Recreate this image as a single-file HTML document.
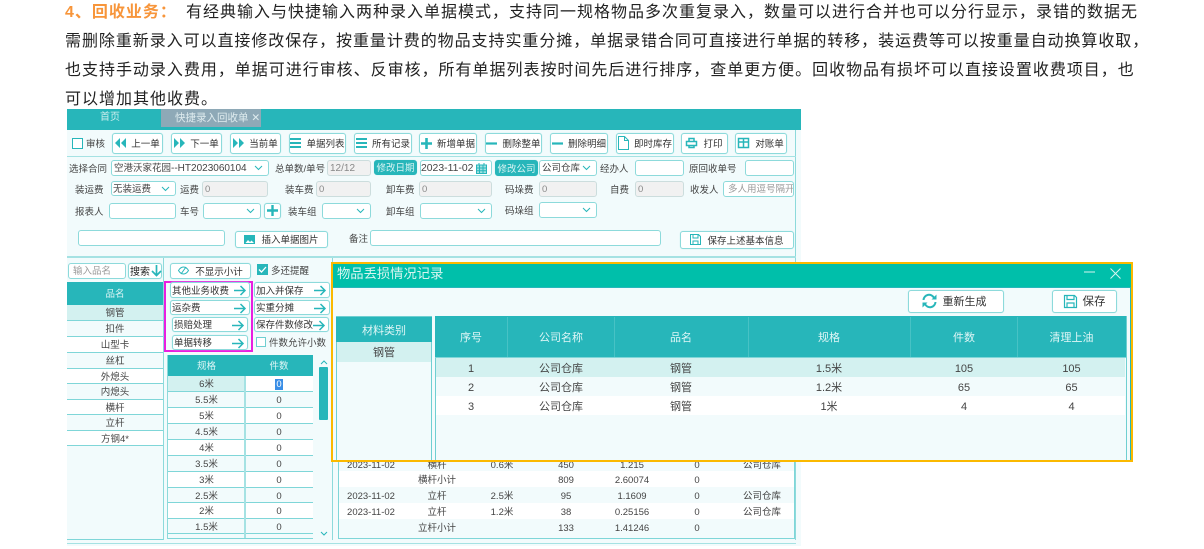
<!DOCTYPE html>
<html lang="zh"><head><meta charset="utf-8"><title>回收业务</title>
<style>
html,body{margin:0;padding:0;background:#fff;width:1204px;height:549px;overflow:hidden}
*{box-sizing:border-box}
body{font-family:"Liberation Sans","Noto Sans CJK SC",sans-serif;position:relative}
.p{position:absolute;left:65px;white-space:nowrap;font-size:16px;letter-spacing:1px;line-height:24px;color:#222}
.d,.t,.b,.i,.r{position:absolute}
.t{white-space:nowrap;font-size:9.5px;line-height:16px;color:#444;margin-top:2px}
.c{text-align:center}
.b{background:#fff;border:1px solid #8ddadb;border-radius:3px;display:flex;align-items:center;justify-content:center;font-size:9.5px;color:#333;white-space:nowrap;box-shadow:0 0 1px #b5e8e8;padding-bottom:1px}
.b svg{flex:none;margin-right:6px}
.i{background:#fff;border:1px solid #8ddadb;border-radius:3px;font-size:9.5px;line-height:16px;color:#444;padding-left:2px;white-space:nowrap;overflow:hidden}
.g{background:#f1f1f1;border-color:#cdd;color:#888}
.ch{position:absolute;right:5px;top:50%;margin-top:-3px}
.h{background:#27b6ba;color:#dff6f6;text-align:center;position:absolute}
.r{border-bottom:1px solid #7fd6d8;text-align:center;font-size:9.5px;color:#444;line-height:17px}
.w{font-size:11px;color:#444;text-align:center;position:absolute;line-height:23px}
svg{display:block;overflow:visible}
.ar{position:absolute;right:3px;top:2px}
.bl{justify-content:flex-start;padding-left:1px}
</style></head><body>

<div class="p" style="top:1px"><b style="color:#f7953a">4、回收业务：</b></div>
<div class="p" style="top:1px;left:186px">有经典输入与快捷输入两种录入单据模式，支持同一规格物品多次重复录入，数量可以进行合并也可以分行显示，录错的数据无</div>
<div class="p" style="top:30px;letter-spacing:.94px">需删除重新录入可以直接修改保存，按重量计费的物品支持实重分摊，单据录错合同可直接进行单据的转移，装运费等可以按重量自动换算收取，</div>
<div class="p" style="top:59px;letter-spacing:.98px">也支持手动录入费用，单据可进行审核、反审核，所有单据列表按时间先后进行排序，查单更方便。回收物品有损坏可以直接设置收费项目，也</div>
<div class="p" style="top:88px">可以增加其他收费。</div>

<div style="position:absolute;left:0;top:0;width:1204px;height:549px;filter:blur(.3px)">
<!-- app background -->
<div class="d" style="left:67px;top:109px;width:734px;height:437px;background:#f2fbfc"></div>
<div class="d" style="left:67px;top:109px;width:734px;height:21px;background:#27b6ba"></div>
<div class="d" style="left:161px;top:109px;width:100px;height:18px;background:#8ea9b7"></div>
<div class="t c" style="left:80px;top:109px;width:60px;color:#cdeeee;font-size:10px;line-height:14px">首页</div>
<div class="t" style="left:175px;top:109px;color:#dfecef;font-size:10.5px;line-height:14px">快捷录入回收单 ✕</div>
<div class="d" style="left:795px;top:130px;width:1px;height:410px;background:#8ddadb"></div>

<!-- toolbar -->
<div class="d" style="left:72px;top:138px;width:11px;height:11px;border:1.5px solid #27b6ba;background:#fff"></div>
<div class="t" style="left:86px;top:135px">审核</div>
<div class="b" style="left:112px;top:133px;width:51px;height:21px"><svg width="11" height="10" style="margin-right:5px"><path d="M5 0v10L0 5zM11 0v10L6 5z" fill="#27b6ba"/></svg>上一单</div>
<div class="b" style="left:171px;top:133px;width:51px;height:21px"><svg width="11" height="10" style="margin-right:5px"><path d="M0 0v10l5-5zM6 0v10l5-5z" fill="#27b6ba"/></svg>下一单</div>
<div class="b" style="left:230px;top:133px;width:51px;height:21px"><svg width="11" height="10" style="margin-right:5px"><path d="M0 0v10l5-5zM6 0v10l5-5z" fill="#27b6ba"/></svg>当前单</div>
<div class="b" style="left:289px;top:133px;width:57px;height:21px"><svg width="11" height="10" style="margin-right:5px"><path d="M0 1h11M0 5h11M0 9h11" stroke="#27b6ba" stroke-width="2"/></svg>单据列表</div>
<div class="b" style="left:354px;top:133px;width:58px;height:21px"><svg width="11" height="10" style="margin-right:5px"><path d="M0 1h11M0 5h11M0 9h11" stroke="#27b6ba" stroke-width="2"/></svg>所有记录</div>
<div class="b" style="left:419px;top:133px;width:58px;height:21px"><svg width="11" height="11" style="margin-right:5px"><path d="M5.500 0v11M0 5.500h11" stroke="#27b6ba" stroke-width="2.600"/></svg>新增单据</div>
<div class="b" style="left:485px;top:133px;width:57px;height:21px"><svg width="11" height="3" style="margin-right:5px"><path d="M0 1.500h11" stroke="#27b6ba" stroke-width="2.200"/></svg>删除整单</div>
<div class="b" style="left:550px;top:133px;width:58px;height:21px"><svg width="11" height="3" style="margin-right:5px"><path d="M0 1.500h11" stroke="#27b6ba" stroke-width="2.200"/></svg>删除明细</div>
<div class="b" style="left:616px;top:133px;width:58px;height:21px"><svg width="11" height="14" style="margin-right:5px"><path d="M.5.500h6l4 4v9H.5zM6.500.5v4h4" fill="none" stroke="#27b6ba"/></svg>即时库存</div>
<div class="b" style="left:681px;top:133px;width:47px;height:21px"><svg width="11" height="10"><path d="M3 3V.5h5V3M.5 3.500h10v4H.5zM3 7v2.500h5V7" fill="none" stroke="#27b6ba" stroke-width="1.500"/></svg>打印</div>
<div class="b" style="left:735px;top:133px;width:52px;height:21px"><svg width="11" height="10"><path d="M.5.500h10v9H.5zM.5 4h10M5.500.5v9" fill="none" stroke="#27b6ba" stroke-width="1.500"/></svg>对账单</div>
<div class="d" style="left:67px;top:156px;width:729px;height:1px;background:#a5e2e3"></div>

<!-- row 1 -->
<div class="t" style="left:69px;top:160px">选择合同</div>
<div class="i" style="left:111px;top:160px;width:158px;height:16px;font-size:10px"><span style="font-size:9.500px">空港沃家花园</span>--HT2023060104<svg class="ch" width="9" height="6"><path d="M1 1l3.500 3.500L8 1" fill="none" stroke="#27b6ba"/></svg></div>
<div class="t" style="left:275px;top:160px">总单数/单号</div>
<div class="i g" style="left:327px;top:160px;width:44px;height:16px;font-size:10px">12/12</div>
<div class="b" style="left:374px;top:160px;width:43px;height:15px;background:#27b6ba;border-color:#27b6ba;color:#d7f3f3">修改日期</div>
<div class="i" style="left:420px;top:160px;width:72px;height:16px;font-size:10.400px;padding-left:0">2023-11-02<svg style="position:absolute;right:4px;top:2px" width="11" height="11"><path d="M0 1.500h11V11H0z" fill="#9fe0e1"/><path d="M.5 2h10v8.500H.5zM.5 5h10M.5 7.700h10M3.500 2v8.500M7 2v8.500M3 0v2M8 0v2" fill="none" stroke="#27b6ba"/></svg></div>
<div class="b" style="left:495px;top:160px;width:43px;height:16px;background:#27b6ba;border-color:#27b6ba;color:#d7f3f3">修改公司</div>
<div class="i" style="left:539px;top:160px;width:58px;height:16px">公司仓库<svg class="ch" width="9" height="6"><path d="M1 1l3.500 3.500L8 1" fill="none" stroke="#27b6ba"/></svg></div>
<div class="t" style="left:600px;top:160px">经办人</div>
<div class="i" style="left:635px;top:160px;width:49px;height:16px"></div>
<div class="t" style="left:689px;top:160px">原回收单号</div>
<div class="i" style="left:745px;top:160px;width:49px;height:16px"></div>

<!-- row 2 -->
<div class="t" style="left:75px;top:181px">装运费</div>
<div class="i" style="left:111px;top:181px;width:65px;height:15px;line-height:15px;padding-left:1px">无装运费<svg class="ch" width="9" height="6"><path d="M1 1l3.500 3.500L8 1" fill="none" stroke="#27b6ba"/></svg></div>
<div class="t" style="left:180px;top:181px">运费</div>
<div class="i g" style="left:202px;top:181px;width:66px;height:16px">0</div>
<div class="t" style="left:285px;top:181px">装车费</div>
<div class="i g" style="left:316px;top:181px;width:55px;height:16px">0</div>
<div class="t" style="left:386px;top:181px">卸车费</div>
<div class="i g" style="left:419px;top:181px;width:73px;height:16px">0</div>
<div class="t" style="left:505px;top:181px">码垛费</div>
<div class="i g" style="left:539px;top:181px;width:58px;height:16px">0</div>
<div class="t" style="left:610px;top:181px">自费</div>
<div class="i g" style="left:635px;top:181px;width:49px;height:16px">0</div>
<div class="t" style="left:690px;top:181px">收发人</div>
<div class="i" style="left:723px;top:181px;width:71px;height:16px;color:#999;padding-left:4px">多人用逗号隔开</div>

<!-- row 3 -->
<div class="t" style="left:75px;top:203px">报表人</div>
<div class="i" style="left:109px;top:203px;width:67px;height:16px"></div>
<div class="t" style="left:180px;top:203px">车号</div>
<div class="i" style="left:203px;top:203px;width:58px;height:16px"><svg class="ch" width="9" height="6"><path d="M1 1l3.500 3.500L8 1" fill="none" stroke="#27b6ba"/></svg></div>
<div class="b" style="left:264px;top:203px;width:17px;height:16px"><svg width="11" height="11" style="margin:0"><path d="M5.500 0v11M0 5.500h11" stroke="#27b6ba" stroke-width="2.400"/></svg></div>
<div class="t" style="left:288px;top:203px">装车组</div>
<div class="i" style="left:322px;top:203px;width:49px;height:16px"><svg class="ch" width="9" height="6"><path d="M1 1l3.500 3.500L8 1" fill="none" stroke="#27b6ba"/></svg></div>
<div class="t" style="left:386px;top:203px">卸车组</div>
<div class="i" style="left:420px;top:203px;width:72px;height:16px"><svg class="ch" width="9" height="6"><path d="M1 1l3.500 3.500L8 1" fill="none" stroke="#27b6ba"/></svg></div>
<div class="t" style="left:505px;top:202px">码垛组</div>
<div class="i" style="left:539px;top:202px;width:58px;height:16px"><svg class="ch" width="9" height="6"><path d="M1 1l3.500 3.500L8 1" fill="none" stroke="#27b6ba"/></svg></div>

<!-- row 4 -->
<div class="i" style="left:78px;top:230px;width:147px;height:16px"></div>
<div class="b" style="left:235px;top:231px;width:93px;height:17px"><svg width="11" height="9"><path d="M0 0h11v9H0z" fill="#27b6ba"/><path d="M1.500 8l2.500-3 2 2 1.500-1.500L10 8z" fill="#fff"/></svg>插入单据图片</div>
<div class="t" style="left:349px;top:230px">备注</div>
<div class="i" style="left:370px;top:230px;width:291px;height:16px"></div>
<div class="b" style="left:680px;top:231px;width:114px;height:18px"><svg width="11" height="11"><path d="M.5.500h8l2 2v8H.5zM3 .500v3.500h5V.500M3 10.500V7h5v3.500" fill="none" stroke="#27b6ba"/></svg>保存上述基本信息</div>

<div class="d" style="left:67px;top:256px;width:729px;height:2px;background:#a5e2e3"></div>
<div class="d" style="left:163px;top:258px;width:1px;height:282px;background:#8ddadb"></div>

<!-- left column -->
<div class="i" style="left:68px;top:263px;width:58px;height:16px;color:#999;padding-left:4px">输入品名</div>
<div class="b bl" style="left:128px;top:263px;width:34px;height:16px;color:#222;font-size:10px">搜索<svg style="margin:0 0 0 1px" width="11" height="11"><path d="M5.500 0v10M1 6l4.500 4.500L10 6" fill="none" stroke="#27b6ba" stroke-width="1.700"/></svg></div>
<div class="h" style="left:67px;top:282px;width:96px;height:23px;font-size:9.500px;line-height:25px">品名</div>
<div class="r" style="left:67px;top:305px;width:96px;height:16px;background:#d3f1f0">钢管</div>
<div class="r" style="left:67px;top:321px;width:96px;height:16px;background:#f2fbfc">扣件</div>
<div class="r" style="left:67px;top:337px;width:96px;height:16px;background:#fff">山型卡</div>
<div class="r" style="left:67px;top:353px;width:96px;height:16px;background:#f2fbfc">丝杠</div>
<div class="r" style="left:67px;top:369px;width:96px;height:15px;background:#fff">外熄头</div>
<div class="r" style="left:67px;top:384px;width:96px;height:16px;background:#f2fbfc">内熄头</div>
<div class="r" style="left:67px;top:400px;width:96px;height:15px;background:#fff">横杆</div>
<div class="r" style="left:67px;top:415px;width:96px;height:16px;background:#f2fbfc">立杆</div>
<div class="r" style="left:67px;top:431px;width:96px;height:15px;background:#fff">方钢4*</div>
<div class="d" style="left:67px;top:539px;width:96px;height:1px;background:#7fd6d8"></div>
<div class="d" style="left:67px;top:543px;width:729px;height:1px;background:#a5e2e3"></div>

<!-- middle buttons -->
<div class="b" style="left:170px;top:263px;width:81px;height:16px"><svg width="11" height="9"><path d="M.5 4.500C2 2 4 1 5.500 1S9 2 10.500 4.500C9 7 7 8 5.500 8S2 7 .5 4.500zM3 8l5-7" fill="none" stroke="#27b6ba"/></svg>不显示小计</div>
<div class="d" style="left:257px;top:264px;width:11px;height:11px;background:#27b6ba"><svg width="11" height="11"><path d="M2 5.500l2.500 2.500L9 3" fill="none" stroke="#fff" stroke-width="1.300"/></svg></div>
<div class="t" style="left:271px;top:262px">多还提醒</div>

<div class="d" style="left:164px;top:281px;width:89px;height:71px;border:2px solid #e91ee0"></div>
<div class="b bl" style="left:170px;top:282px;width:80px;height:16px">其他业务收费<svg class="ar" width="12" height="11" style="margin:0"><path d="M0 5.500h11M6.500 1l4.500 4.500L6.500 10" fill="none" stroke="#27b6ba" stroke-width="1.500"/></svg></div>
<div class="b bl" style="left:170px;top:300px;width:80px;height:15px">运杂费<svg class="ar" width="12" height="11" style="margin:0"><path d="M0 5.500h11M6.500 1l4.500 4.500L6.500 10" fill="none" stroke="#27b6ba" stroke-width="1.500"/></svg></div>
<div class="b bl" style="left:172px;top:317px;width:76px;height:15px">损赔处理<svg class="ar" width="12" height="11" style="margin:0"><path d="M0 5.500h11M6.500 1l4.500 4.500L6.500 10" fill="none" stroke="#27b6ba" stroke-width="1.500"/></svg></div>
<div class="b bl" style="left:172px;top:335px;width:76px;height:15px">单据转移<svg class="ar" width="12" height="11" style="margin:0"><path d="M0 5.500h11M6.500 1l4.500 4.500L6.500 10" fill="none" stroke="#27b6ba" stroke-width="1.500"/></svg></div>
<div class="b bl" style="left:254px;top:282px;width:76px;height:16px">加入并保存<svg class="ar" width="12" height="11" style="margin:0"><path d="M0 5.500h11M6.500 1l4.500 4.500L6.500 10" fill="none" stroke="#27b6ba" stroke-width="1.500"/></svg></div>
<div class="b bl" style="left:254px;top:300px;width:76px;height:15px">实重分摊<svg class="ar" width="12" height="11" style="margin:0"><path d="M0 5.500h11M6.500 1l4.500 4.500L6.500 10" fill="none" stroke="#27b6ba" stroke-width="1.500"/></svg></div>
<div class="b bl" style="left:254px;top:317px;width:75px;height:15px">保存件数修改<svg class="ar" width="12" height="11" style="margin:0"><path d="M0 5.500h11M6.500 1l4.500 4.500L6.500 10" fill="none" stroke="#27b6ba" stroke-width="1.500"/></svg></div>
<div class="d" style="left:256px;top:337px;width:10px;height:10px;border:1.200px solid #6fcfd1;background:#fff"></div>
<div class="t" style="left:269px;top:334px">件数允许小数</div>

<!-- spec table -->
<div class="d" style="left:167px;top:355px;width:1px;height:184px;background:#8ddadb"></div>
<div class="h" style="left:168px;top:355px;width:77px;height:21px;font-size:9.500px;line-height:23px">规格</div>
<div class="h" style="left:245px;top:355px;width:68px;height:21px;font-size:9.500px;line-height:23px">件数</div>
<div class="r" style="left:168px;top:376px;width:77px;height:16px;background:#d3f1f0">6米</div><div class="r" style="left:245px;top:376px;width:68px;height:16px;background:#fff"><span style="background:#3a8ee6;color:#fff;padding:0 1px">0</span></div>
<div class="r" style="left:168px;top:392px;width:77px;height:16px;background:#f2fbfc">5.5米</div><div class="r" style="left:245px;top:392px;width:68px;height:16px;background:#f2fbfc">0</div>
<div class="r" style="left:168px;top:408px;width:77px;height:16px;background:#fff">5米</div><div class="r" style="left:245px;top:408px;width:68px;height:16px;background:#fff">0</div>
<div class="r" style="left:168px;top:424px;width:77px;height:16px;background:#f2fbfc">4.5米</div><div class="r" style="left:245px;top:424px;width:68px;height:16px;background:#f2fbfc">0</div>
<div class="r" style="left:168px;top:440px;width:77px;height:16px;background:#fff">4米</div><div class="r" style="left:245px;top:440px;width:68px;height:16px;background:#fff">0</div>
<div class="r" style="left:168px;top:456px;width:77px;height:16px;background:#f2fbfc">3.5米</div><div class="r" style="left:245px;top:456px;width:68px;height:16px;background:#f2fbfc">0</div>
<div class="r" style="left:168px;top:472px;width:77px;height:16px;background:#fff">3米</div><div class="r" style="left:245px;top:472px;width:68px;height:16px;background:#fff">0</div>
<div class="r" style="left:168px;top:488px;width:77px;height:15px;background:#f2fbfc">2.5米</div><div class="r" style="left:245px;top:488px;width:68px;height:15px;background:#f2fbfc">0</div>
<div class="r" style="left:168px;top:503px;width:77px;height:16px;background:#fff">2米</div><div class="r" style="left:245px;top:503px;width:68px;height:16px;background:#fff">0</div>
<div class="r" style="left:168px;top:519px;width:77px;height:15px;background:#f2fbfc">1.5米</div><div class="r" style="left:245px;top:519px;width:68px;height:15px;background:#f2fbfc">0</div>
<div class="d" style="left:244px;top:376px;width:2px;height:163px;background:#a5e2e3"></div>
<div class="d" style="left:168px;top:538px;width:145px;height:1px;background:#7fd6d8"></div>
<div class="d" style="left:319px;top:367px;width:9px;height:53px;background:#27b6ba;border-radius:1px"></div>
<svg class="d" style="left:320px;top:360px" width="8" height="5"><path d="M1 4l3-3 3 3" fill="none" stroke="#27b6ba"/></svg>
<svg class="d" style="left:320px;top:531px" width="8" height="5"><path d="M1 1l3 3 3-3" fill="none" stroke="#27b6ba"/></svg>
<div class="d" style="left:332px;top:258px;width:1px;height:282px;background:#8ddadb"></div>

<!-- right underlying table -->
<div class="d" style="left:338px;top:458px;width:457px;height:81px;background:#f2fbfc;border:1px solid #7fd6d8;border-top:0"></div>
<div class="d" style="left:339px;top:471px;width:455px;height:16px;background:#fff"></div>
<div class="d" style="left:339px;top:503px;width:455px;height:16px;background:#fff"></div>

<div class="t c" style="left:341px;top:456px;width:60px;">2023-11-02</div><div class="t c" style="left:407px;top:456px;width:60px">横杆</div><div class="t c" style="left:472px;top:456px;width:60px">0.6米</div><div class="t c" style="left:536px;top:456px;width:60px">450</div><div class="t c" style="left:602px;top:456px;width:60px">1.215</div><div class="t c" style="left:667px;top:456px;width:60px">0</div><div class="t c" style="left:732px;top:456px;width:60px">公司仓库</div>
<div class="t c" style="left:407px;top:471px;width:60px">横杆小计</div><div class="t c" style="left:536px;top:471px;width:60px">809</div><div class="t c" style="left:602px;top:471px;width:60px">2.60074</div><div class="t c" style="left:667px;top:471px;width:60px">0</div>
<div class="t c" style="left:341px;top:487px;width:60px">2023-11-02</div><div class="t c" style="left:407px;top:487px;width:60px">立杆</div><div class="t c" style="left:472px;top:487px;width:60px">2.5米</div><div class="t c" style="left:536px;top:487px;width:60px">95</div><div class="t c" style="left:602px;top:487px;width:60px">1.1609</div><div class="t c" style="left:667px;top:487px;width:60px">0</div><div class="t c" style="left:732px;top:487px;width:60px">公司仓库</div>
<div class="t c" style="left:341px;top:503px;width:60px">2023-11-02</div><div class="t c" style="left:407px;top:503px;width:60px">立杆</div><div class="t c" style="left:472px;top:503px;width:60px">1.2米</div><div class="t c" style="left:536px;top:503px;width:60px">38</div><div class="t c" style="left:602px;top:503px;width:60px">0.25156</div><div class="t c" style="left:667px;top:503px;width:60px">0</div><div class="t c" style="left:732px;top:503px;width:60px">公司仓库</div>
<div class="t c" style="left:407px;top:519px;width:60px">立杆小计</div><div class="t c" style="left:536px;top:519px;width:60px">133</div><div class="t c" style="left:602px;top:519px;width:60px">1.41246</div><div class="t c" style="left:667px;top:519px;width:60px">0</div>

<!-- dialog -->
<div class="d" style="left:331px;top:262px;width:802px;height:200px;background:#f2fbfc;border:2px solid #fbb900"></div>
<div class="d" style="left:333px;top:264px;width:798px;height:24px;background:#00bfaa;border-bottom:1px solid #27b6ba"></div>
<div class="t" style="left:337px;top:263px;font-size:13.300px;line-height:18px;color:#d8f5f0">物品丢损情况记录</div>
<svg class="d" style="left:1084px;top:271px" width="12" height="3"><path d="M0 1h11" stroke="#d8f5f0"/></svg>
<svg class="d" style="left:1110px;top:268px" width="11" height="11"><path d="M.5.500l10 10M10.500.500l-10 10" stroke="#d8f5f0"/></svg>
<div class="d" style="left:1130px;top:288px;width:1px;height:172px;background:#27b6ba"></div>

<div class="b" style="left:908px;top:290px;width:96px;height:23px;font-size:11px;padding-right:4px"><svg width="15" height="14" style="margin-right:6px"><path d="M1.500 6A5.500 5.500 0 0 1 12 4M13.500 8A5.500 5.500 0 0 1 3 10" fill="none" stroke="#27b6ba" stroke-width="2"/><path d="M9.500 5.500h5V.500zM5.500 8.500H.5v5z" fill="#27b6ba"/></svg>重新生成</div>
<div class="b" style="left:1052px;top:290px;width:65px;height:23px;font-size:11.500px"><svg width="13" height="13" style="margin-right:6px"><path d="M.5.500h10l2 2v10H.5zM3 .500v4h7v-4M3 12.500V8h7v4.500" fill="none" stroke="#27b6ba" stroke-width="1.200"/></svg>保存</div>

<div class="d" style="left:336px;top:316px;width:96px;height:144px;border:1px solid #6fcfd1;border-bottom:0"></div>
<div class="h" style="left:336px;top:317px;width:96px;height:25px;font-size:11px;line-height:28px">材料类别</div>
<div class="w" style="left:337px;top:342px;width:94px;height:20px;background:#d3f1f0;">钢管</div>

<div class="d" style="left:435px;top:316px;width:692px;height:144px;border:1px solid #6fcfd1;border-bottom:0;border-top:0"></div>
<div class="h" style="left:435px;top:316px;width:691px;height:42px;font-size:11px;line-height:42px;border-bottom:1px solid #7fd6d8"></div>
<div class="t c" style="left:436px;top:328px;width:70px;font-size:11px;color:#dff6f6">序号</div>
<div class="t c" style="left:508px;top:328px;width:106px;font-size:11px;color:#dff6f6">公司名称</div>
<div class="t c" style="left:615px;top:328px;width:132px;font-size:11px;color:#dff6f6">品名</div>
<div class="t c" style="left:749px;top:328px;width:160px;font-size:11px;color:#dff6f6">规格</div>
<div class="t c" style="left:911px;top:328px;width:106px;font-size:11px;color:#dff6f6">件数</div>
<div class="t c" style="left:1018px;top:328px;width:107px;font-size:11px;color:#dff6f6">清理上油</div>
<div class="d" style="left:507px;top:317px;width:1px;height:40px;background:#47c2c5"></div>
<div class="d" style="left:614px;top:317px;width:1px;height:40px;background:#47c2c5"></div>
<div class="d" style="left:748px;top:317px;width:1px;height:40px;background:#47c2c5"></div>
<div class="d" style="left:910px;top:317px;width:1px;height:40px;background:#47c2c5"></div>
<div class="d" style="left:1017px;top:317px;width:1px;height:40px;background:#47c2c5"></div>

<div class="d" style="left:436px;top:358px;width:689px;height:19px;background:#d3f1f0"></div>
<div class="d" style="left:436px;top:396px;width:689px;height:19px;background:#fff"></div>

<div class="w" style="left:436px;top:358px;width:70px">1</div><div class="w" style="left:508px;top:358px;width:106px">公司仓库</div><div class="w" style="left:615px;top:358px;width:132px">钢管</div><div class="w" style="left:749px;top:358px;width:160px">1.5米</div><div class="w" style="left:911px;top:358px;width:106px">105</div><div class="w" style="left:1018px;top:358px;width:107px">105</div>
<div class="w" style="left:436px;top:377px;width:70px">2</div><div class="w" style="left:508px;top:377px;width:106px">公司仓库</div><div class="w" style="left:615px;top:377px;width:132px">钢管</div><div class="w" style="left:749px;top:377px;width:160px">1.2米</div><div class="w" style="left:911px;top:377px;width:106px">65</div><div class="w" style="left:1018px;top:377px;width:107px">65</div>
<div class="w" style="left:436px;top:396px;width:70px">3</div><div class="w" style="left:508px;top:396px;width:106px">公司仓库</div><div class="w" style="left:615px;top:396px;width:132px">钢管</div><div class="w" style="left:749px;top:396px;width:160px">1米</div><div class="w" style="left:911px;top:396px;width:106px">4</div><div class="w" style="left:1018px;top:396px;width:107px">4</div>
</div>

</body></html>
